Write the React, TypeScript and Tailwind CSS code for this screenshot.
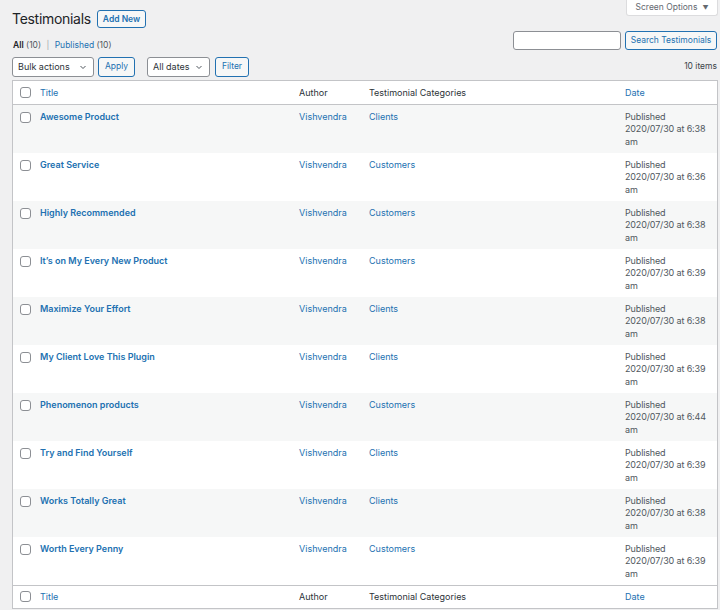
import React from "react";

const rows = [
  { t: "Awesome Product", c: "Clients", time: "6:38" },
  { t: "Great Service", c: "Customers", time: "6:36" },
  { t: "Highly Recommended", c: "Customers", time: "6:38" },
  { t: "It’s on My Every New Product", c: "Customers", time: "6:39" },
  { t: "Maximize Your Effort", c: "Clients", time: "6:38" },
  { t: "My Client Love This Plugin", c: "Clients", time: "6:39" },
  { t: "Phenomenon products", c: "Customers", time: "6:44" },
  { t: "Try and Find Yourself", c: "Clients", time: "6:39" },
  { t: "Works Totally Great", c: "Clients", time: "6:38" },
  { t: "Worth Every Penny", c: "Customers", time: "6:39" },
];

const Check = () => (
  <span className="block w-[11px] h-[11px] rounded-[3px] border border-[#8c8f94] bg-white" />
);

const Chevron = () => (
  <svg width="8" height="8" viewBox="0 0 8 8" className="text-[#50575e]">
    <path d="M1.5 3 L4 5.5 L6.5 3" fill="none" stroke="currentColor" strokeWidth="1" />
  </svg>
);

const grid = "grid grid-cols-[21px_259px_70px_257px_1fr]";

const HeaderRow = ({ top }: { top: boolean }) => (
  <div
    className={`${grid} ${top ? "h-[24px] border-b" : "h-[23px] border-t"} items-center bg-white border-[#c3c4c7]`}
  >
    <div className="pl-[7px]">
      <Check />
    </div>
    <div className="pl-[6px] text-[#2271b1]">Title</div>
    <div className="pl-[6px] text-[#2c3338]">Author</div>
    <div className="pl-[6px] text-[#2c3338]">Testimonial Categories</div>
    <div className="pl-[5px] text-[#2271b1]">Date</div>
  </div>
);

export default function App() {
  return (
    <div
      className="w-[720px] h-[610px] bg-[#f0f0f1] text-[9px] text-[#3c434a] overflow-hidden relative"
      style={{ fontFamily: "Inter, 'Noto Sans', sans-serif" }}
    >
      <div className="absolute right-[2px] top-0 w-[92px] h-[16px] bg-white border border-t-0 border-[#dcdcde] rounded-b-[3px] flex items-center justify-center gap-[5px] text-[#646970] text-[8.5px]">
        <span>Screen Options</span>
        <span className="text-[6px]">▼</span>
      </div>

      <div className="flex items-center gap-[6px] pl-[12px] pt-[10px] h-[28px]">
        <h1 className="text-[14px] text-[#1d2327] leading-none tracking-[-0.3px]">Testimonials</h1>
        <button className="h-[18px] px-[5px] border border-[#2271b1] rounded-[3px] text-[#2271b1] text-[8.5px] font-semibold bg-[#f6f7f7]">
          Add New
        </button>
      </div>

      <div className="flex justify-between pl-[13px] pr-[3px] mt-[3px]">
        <div className="pt-[8px] text-[8.5px] text-[#50575e]">
          <span className="text-[#1d2327] font-semibold">All</span> (10){" "}
          <span className="text-[#a7aaad] mx-[3px]">|</span>{" "}
          <span className="text-[#2271b1]">Published</span> (10)
        </div>
        <div className="flex gap-[4px]">
          <div className="w-[108px] h-[19px] bg-white border border-[#8c8f94] rounded-[3px]" />
          <button className="w-[92px] h-[19px] border border-[#2271b1] rounded-[3px] bg-[#f6f7f7] text-[#2271b1] text-[8.5px]">
            Search Testimonials
          </button>
        </div>
      </div>

      <div className="flex justify-between items-center pl-[12px] pr-[3px] mt-[5px]">
        <div className="flex items-center">
          <div className="w-[82px] h-[20px] bg-white border border-[#8c8f94] rounded-[3px] flex items-center justify-between pl-[5px] pr-[6px] text-[#2c3338]">
            <span>Bulk actions</span>
            <Chevron />
          </div>
          <button className="ml-[4px] w-[37px] h-[20px] border border-[#2271b1] rounded-[3px] bg-[#f6f7f7] text-[#2271b1] text-[8.5px]">
            Apply
          </button>
          <div className="ml-[12px] w-[63px] h-[20px] bg-white border border-[#8c8f94] rounded-[3px] flex items-center justify-between pl-[5px] pr-[6px] text-[#2c3338]">
            <span>All dates</span>
            <Chevron />
          </div>
          <button className="ml-[5px] w-[34px] h-[20px] border border-[#2271b1] rounded-[3px] bg-[#f6f7f7] text-[#2271b1] text-[8.5px]">
            Filter
          </button>
        </div>
        <div className="text-[8.5px] text-[#3c434a]">10 items</div>
      </div>

      <div className="ml-[12px] mr-[2px] mt-[3px] border border-[#c3c4c7] bg-white">
        <HeaderRow top />
        {rows.map((r, i) => (
          <div
            key={r.t}
            className={`${grid} h-[48px] items-start ${i % 2 === 0 ? "bg-[#f6f7f7]" : "bg-white"}`}
          >
            <div className="pl-[7px] pt-[7px]">
              <Check />
            </div>
            <div className="pl-[6px] pt-[6px] text-[#2271b1] font-semibold leading-[12px]">{r.t}</div>
            <div className="pl-[6px] pt-[6px] text-[#2271b1] leading-[12px]">Vishvendra</div>
            <div className="pl-[6px] pt-[6px] text-[#2271b1] leading-[12px]">{r.c}</div>
            <div className="pl-[5px] pt-[6px] text-[#50575e] leading-[12.5px] tracking-[-0.15px]">
              Published
              <br />
              2020/07/30 at {r.time}
              <br />
              am
            </div>
          </div>
        ))}
        <HeaderRow top={false} />
      </div>
    </div>
  );
}
